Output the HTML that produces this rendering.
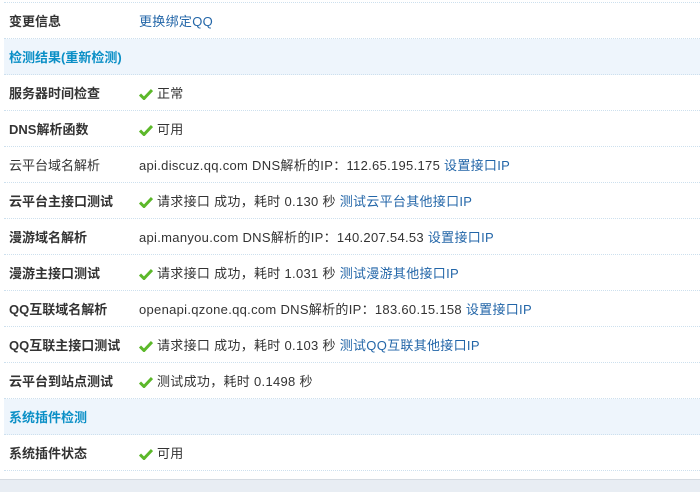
<!DOCTYPE html><html><head><meta charset="utf-8"><style>
body{margin:0;width:700px;height:491px;background:#fff;font:13px "Liberation Sans","Noto Sans CJK SC",sans-serif;color:#333;overflow:hidden;position:relative}
.r{position:absolute;left:4px;width:696px;height:35px;border-bottom:1px dotted #cde0ee;line-height:38px}
.r .l{position:absolute;left:5px;font-weight:bold;color:#333}
.r .v{position:absolute;left:135px;color:#333;letter-spacing:0.3px}
.s{background:#eef5fc}
.s .l{color:#0a8fc6}
a{color:#2366a8;text-decoration:none}
svg{vertical-align:-2px;margin-right:4px}
.foot{position:absolute;left:0;top:479px;width:700px;height:12px;background:#e8edf3;border-top:1px solid #d5dbe2}
</style></head><body>
<div class="r" style="top:-33px"></div>
<div class="r" style="top:3px"><span class="l">变更信息</span><span class="v"><a>更换绑定QQ</a></span></div>
<div class="r s" style="top:39px"><span class="l">检测结果(重新检测)</span></div>
<div class="r" style="top:75px"><span class="l">服务器时间检查</span><span class="v"><svg width="14" height="12" viewBox="0 0 14 12"><path d="M1 6.5L5 10.5L13 2" stroke="#5cb82a" stroke-width="3" fill="none"/></svg>正常</span></div>
<div class="r" style="top:111px"><span class="l">DNS解析函数</span><span class="v"><svg width="14" height="12" viewBox="0 0 14 12"><path d="M1 6.5L5 10.5L13 2" stroke="#5cb82a" stroke-width="3" fill="none"/></svg>可用</span></div>
<div class="r" style="top:147px"><span class="l" style="font-weight:normal">云平台域名解析</span><span class="v">api.discuz.qq.com DNS解析的IP：112.65.195.175 <a>设置接口IP</a></span></div>
<div class="r" style="top:183px"><span class="l">云平台主接口测试</span><span class="v"><svg width="14" height="12" viewBox="0 0 14 12"><path d="M1 6.5L5 10.5L13 2" stroke="#5cb82a" stroke-width="3" fill="none"/></svg>请求接口 成功，耗时 0.130 秒 <a>测试云平台其他接口IP</a></span></div>
<div class="r" style="top:219px"><span class="l">漫游域名解析</span><span class="v">api.manyou.com DNS解析的IP：140.207.54.53 <a>设置接口IP</a></span></div>
<div class="r" style="top:255px"><span class="l">漫游主接口测试</span><span class="v"><svg width="14" height="12" viewBox="0 0 14 12"><path d="M1 6.5L5 10.5L13 2" stroke="#5cb82a" stroke-width="3" fill="none"/></svg>请求接口 成功，耗时 1.031 秒 <a>测试漫游其他接口IP</a></span></div>
<div class="r" style="top:291px"><span class="l">QQ互联域名解析</span><span class="v">openapi.qzone.qq.com DNS解析的IP：183.60.15.158 <a>设置接口IP</a></span></div>
<div class="r" style="top:327px"><span class="l">QQ互联主接口测试</span><span class="v"><svg width="14" height="12" viewBox="0 0 14 12"><path d="M1 6.5L5 10.5L13 2" stroke="#5cb82a" stroke-width="3" fill="none"/></svg>请求接口 成功，耗时 0.103 秒 <a>测试QQ互联其他接口IP</a></span></div>
<div class="r" style="top:363px"><span class="l">云平台到站点测试</span><span class="v"><svg width="14" height="12" viewBox="0 0 14 12"><path d="M1 6.5L5 10.5L13 2" stroke="#5cb82a" stroke-width="3" fill="none"/></svg>测试成功，耗时 0.1498 秒</span></div>
<div class="r s" style="top:399px"><span class="l">系统插件检测</span></div>
<div class="r" style="top:435px"><span class="l">系统插件状态</span><span class="v"><svg width="14" height="12" viewBox="0 0 14 12"><path d="M1 6.5L5 10.5L13 2" stroke="#5cb82a" stroke-width="3" fill="none"/></svg>可用</span></div>
<div class="foot"></div>
</body></html>
